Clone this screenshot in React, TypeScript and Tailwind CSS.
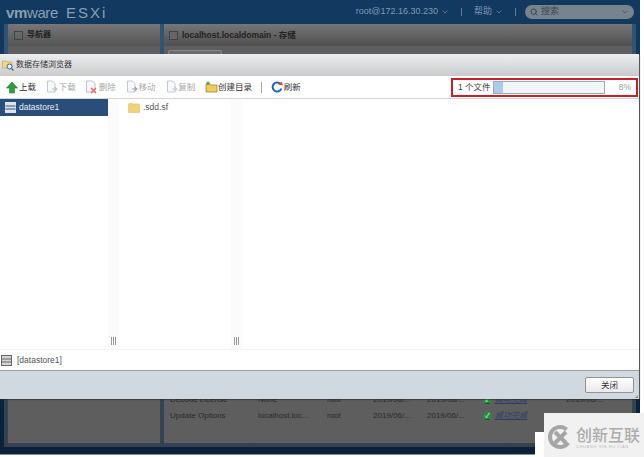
import React from 'react';
import { ChevronDown, Search } from 'lucide-react';

const font = "font-['Liberation_Sans','Noto_Sans_CJK_SC',sans-serif]";

const FolderIcon = () => (
  <svg width="12" height="10" viewBox="0 0 12 10">
    <path d="M0.5 2 L0.5 9 Q0.5 9.5 1 9.5 L11 9.5 Q11.5 9.5 11.5 9 L11.5 2 Q11.5 1 10.5 1 L5 1 L4 0.3 L1.5 0.3 Q0.5 0.3 0.5 2Z" fill="#efd27a" stroke="#dcc06a" strokeWidth="0.6" />
  </svg>
);

const DatastoreIcon = ({ light }: { light?: boolean }) => (
  <svg width="11" height="11" viewBox="0 0 11 11">
    <rect x="0.5" y="0.5" width="10" height="10" fill={light ? '#dfe4ea' : '#d5d5d5'} stroke={light ? '#dfe4ea' : '#666'} />
    <path d="M0.5 4 H10.5 M0.5 7 H10.5" stroke={light ? '#2a4e7a' : '#666'} />
  </svg>
);

const FileAction = ({ accent }: { accent: string }) => (
  <svg width="13" height="14" viewBox="0 0 13 14">
    <path d="M2.5 1 H7.5 L10 3.5 V12 H2.5 Z" fill="#f7f8f9" stroke="#c3cad1" />
    <path d="M7 9 H12 M9.5 7 L12 9 L9.5 11" fill="none" stroke={accent} strokeWidth="1.2" />
  </svg>
);

const DeleteAction = () => (
  <svg width="13" height="14" viewBox="0 0 13 14">
    <path d="M1.5 1 H7.5 L10 3.5 V12 H1.5 Z" fill="#f4f6f9" stroke="#b8c4d6" />
    <path d="M6 8 L11 13 M11 8 L6 13" stroke="#dc6a62" strokeWidth="1.4" />
  </svg>
);

const ToolItem = ({ icon, label, off }: { icon: React.ReactNode; label: string; off?: boolean }) => (
  <div className="flex items-center">
    <span className="flex w-[14px] justify-center">{icon}</span>
    <span className={off ? 'text-[#a9a9a9]' : 'text-[#333]'}>{label}</span>
  </div>
);

const Grip = () => (
  <div className="flex w-[11px] items-end justify-center gap-[1px] bg-[#fbfbfb] pb-[4px]">
    <span className="h-[8px] w-px bg-[#999]" />
    <span className="h-[8px] w-px bg-[#999]" />
    <span className="h-[8px] w-px bg-[#999]" />
  </div>
);

const BackRow = ({ a, b, d1, d2, status }: { a: string; b: string; d1: string; d2: string; status: string }) => (
  <div className="flex h-[16px] items-center text-[8px] whitespace-nowrap text-[#2a2a2a]">
    <span className="w-[90px] pl-[6px]">{a}</span>
    <span className="w-[69px] pl-[4px]">{b}</span>
    <span className="w-[46px] pl-[4px]">root</span>
    <span className="w-[54px] pl-[4px]">{d1}</span>
    <span className="w-[56px] pl-[4px]">{d2}</span>
    <span className="flex w-[87px] items-center gap-[3px] pl-[4px] text-[#24406a] italic underline">
      <span className="flex h-[9px] w-[9px] items-center justify-center rounded-full bg-[#2f8a3c] text-[7px] text-[#cfe] not-italic no-underline">✓</span>
      {status}
    </span>
    <span>{d1}</span>
  </div>
);

export default function App() {
  return (
    <div className={`relative h-[457px] w-[644px] overflow-hidden bg-white ${font}`}>
      {/* dimmed ESXi page behind the dialog */}
      <div className="flex h-[455px] w-[640px] flex-col border-b border-[#8a8f94] bg-gradient-to-b from-[#123a60] to-[#0c2039]">
        <div className="flex h-[24px] shrink-0 items-center pr-[6px] pl-[6px] text-[9px] text-[#7e99b2]">
          <span className="text-[15px] leading-none font-bold tracking-tight text-[#8b9fb2]">
            vm<span className="font-normal">ware</span>
            <span className="ml-[8px] font-normal tracking-[2px]">ESXi</span>
          </span>
          <span className="ml-auto flex items-center gap-[3px]">
            root@172.16.30.230 <ChevronDown size={8} />
          </span>
          <span className="mx-[12px] h-[8px] w-px bg-[#5f7d98]" />
          <span className="flex items-center gap-[3px]">
            帮助 <ChevronDown size={8} />
          </span>
          <span className="mr-[9px] ml-[12px] h-[8px] w-px bg-[#5f7d98]" />
          <span className="flex h-[14px] w-[109px] items-center gap-[3px] rounded-full bg-[#77838d] px-[5px] text-[#3c4650]">
            <Search size={8} strokeWidth={3} />
            搜索
            <ChevronDown size={8} className="ml-auto" />
          </span>
        </div>
        <div className="mx-[4px] mb-[7px] flex min-h-0 flex-1 gap-[4px] bg-gradient-to-b from-[#2f5576] to-[#33424f] px-[4px] pb-[4px]">
          <div className="flex w-[152px] flex-col bg-[#5e5e5e]">
            <div className="flex h-[22px] items-center gap-[4px] bg-gradient-to-b from-[#777] to-[#555] px-[6px] text-[8px] font-bold text-[#222]">
              <span className="h-[9px] w-[9px] border border-[#3b4650]" />
              导航器
            </div>
          </div>
          <div className="flex min-w-0 flex-1 flex-col bg-[#5e5e5e] pb-[19px]">
            <div className="flex h-[22px] items-center gap-[4px] bg-gradient-to-b from-[#777] to-[#4f4f4f] px-[5px] text-[8.5px] font-bold text-[#222]">
              <span className="h-[9px] w-[9px] border border-[#3b4650] bg-[#666]" />
              localhost.localdomain - 存储
            </div>
            <div className="mt-[4px] ml-[4px] h-[6px] w-[54px] rounded-t-[2px] border border-[#888] bg-[#6b6b6b]" />
            <div className="flex-1" />
            <BackRow a="Decode License" b="None" d1="2019/06/..." d2="2019/06/..." status="成功完成" />
            <BackRow a="Update Options" b="localhost.loc..." d1="2019/06/..." d2="2019/06/..." status="成功完成" />
          </div>
        </div>
      </div>

      {/* datastore browser dialog */}
      <div className="absolute top-[54px] left-0 flex h-[345px] w-[640px] flex-col rounded-tr-[3px] border-r border-[#555] bg-white text-[8.5px] shadow-[0_1px_1px_rgba(40,40,40,0.6)]">
        <div className="flex h-[22px] shrink-0 items-center gap-[2px] bg-gradient-to-b from-[#eceef0] to-[#c9cbcd] pl-[2px] text-[8px] text-[#333]">
          <svg width="12" height="12" viewBox="0 0 12 12">
            <path d="M0.5 2 H4 L5 3 H10 V9 H0.5 Z" fill="#f2d684" stroke="#c9a94a" strokeWidth="0.7" />
            <circle cx="7.5" cy="7.5" r="2.5" fill="#e6eef6" stroke="#39689a" />
            <path d="M9.5 9.5 L11.5 11.5" stroke="#39689a" strokeWidth="1.3" />
          </svg>
          数据存储浏览器
        </div>
        <div className="flex h-[23px] shrink-0 items-center gap-[8.8px] border-b border-[#d3d5d8] pl-[5px]">
          <ToolItem
            label="上载"
            icon={
              <svg width="12" height="13" viewBox="0 0 12 13">
                <path d="M6 1 L11.5 7 H8.5 V12 H3.5 V7 H0.5 Z" fill="#2e9e3c" stroke="#1f7d2c" strokeWidth="0.6" />
              </svg>
            }
          />
          <ToolItem label="下载" off icon={<FileAction accent="#a9d3a9" />} />
          <ToolItem label="删除" off icon={<DeleteAction />} />
          <ToolItem label="移动" off icon={<FileAction accent="#9aa7b4" />} />
          <ToolItem label="复制" off icon={<FileAction accent="#c5ccd3" />} />
          <ToolItem
            label="创建目录"
            icon={
              <svg width="13" height="12" viewBox="0 0 13 12">
                <path d="M1 3 H5 L6 4 H12 V11 H1 Z" fill="#f0cc5f" stroke="#8f7a2b" strokeWidth="0.7" />
                <path d="M3 0.5 V4 M1.2 2.2 H4.8" stroke="#3c9a46" strokeWidth="1.2" />
              </svg>
            }
          />
          <span className="mr-[-1px] h-[11px] w-px bg-[#a5a8ab]" />
          <ToolItem
            label="刷新"
            icon={
              <svg width="12" height="12" viewBox="0 0 12 12">
                <path d="M9.8 3.4 A4.5 4.5 0 1 0 10.4 7.5" fill="none" stroke="#1f66c4" strokeWidth="2" />
                <path d="M7 3.6 L11.6 4.6 L11 0.4 Z" fill="#e0402f" />
              </svg>
            }
          />
          {/* upload progress, red box is part of the screenshot */}
          <div className="mr-px ml-auto flex h-[19px] w-[187px] items-center border-2 border-[#c8202a] pr-[5px] pl-[5px] text-[#444]">
            <span className="w-[35px] whitespace-nowrap">1 个文件</span>
            <div className="flex h-[13px] w-[112px] border border-[#a5a9ad] bg-[#f0f5f8]">
              <div className="h-full w-[9px] bg-[#a8cdef]" />
            </div>
            <span className="ml-auto text-[#9a9a9a]">8%</span>
          </div>
        </div>
        <div className="flex min-h-0 flex-1 border-b border-[#f1f2f3]">
          <div className="w-[108px]">
            <div className="flex h-[17px] items-center gap-[3px] bg-[#2a4e7a] pl-[5px] text-[#e8edf3]">
              <DatastoreIcon light />
              datastore1
            </div>
          </div>
          <Grip />
          <div className="w-[112px]">
            <div className="flex h-[17px] items-center gap-[3px] pl-[9px] text-[#555]">
              <FolderIcon />
              .sdd.sf
            </div>
          </div>
          <Grip />
          <div className="flex-1" />
        </div>
        <div className="flex h-[21px] shrink-0 items-center gap-[5px] border-b border-[#9b9d9f] pl-[1px] text-[#555]">
          <DatastoreIcon />
          [datastore1]
        </div>
        <div className="relative flex h-[28px] shrink-0 items-start justify-end bg-[#d0d8e0] pt-[6px] pr-[5px]">
          <button className="h-[16px] w-[49px] rounded-[2px] border border-[#8f9296] bg-gradient-to-b from-white to-[#e9e9e9] text-[8.5px] text-[#333]">
            关闭
          </button>
          <svg width="5" height="5" viewBox="0 0 5 5" className="absolute right-0 bottom-0">
            <path d="M4 1 V4 H1 Z" fill="#8a8f94" />
          </svg>
        </div>
      </div>

      {/* site watermark pasted over the corner */}
      <div className="absolute right-0 bottom-0 flex h-[44px] w-[100px] items-center gap-[3px] bg-[#f1f1f1] pl-[3px]">
        <svg width="26" height="26" viewBox="0 0 26 26" className="mt-[3px] shrink-0">
          <circle cx="13" cy="13" r="10" fill="none" stroke="#a5a5a5" strokeWidth="4" strokeDasharray="48 15" transform="rotate(35 13 13)" />
          <path d="M8 8 L19 19 M19 8 L8 19" stroke="#a5a5a5" strokeWidth="4" />
        </svg>
        <div className="mt-[5px] flex flex-col">
          <span className="text-[16px] leading-[17px] font-medium whitespace-nowrap text-[#adadad]">创新互联</span>
          <span className="text-[4px] leading-[5px] tracking-[0.6px] whitespace-nowrap text-[#bbb]">CHUANG XIN HU LIAN</span>
        </div>
      </div>
      <div className="absolute bottom-0 left-[535px] h-[25px] w-[9px] bg-white" />
    </div>
  );
}
